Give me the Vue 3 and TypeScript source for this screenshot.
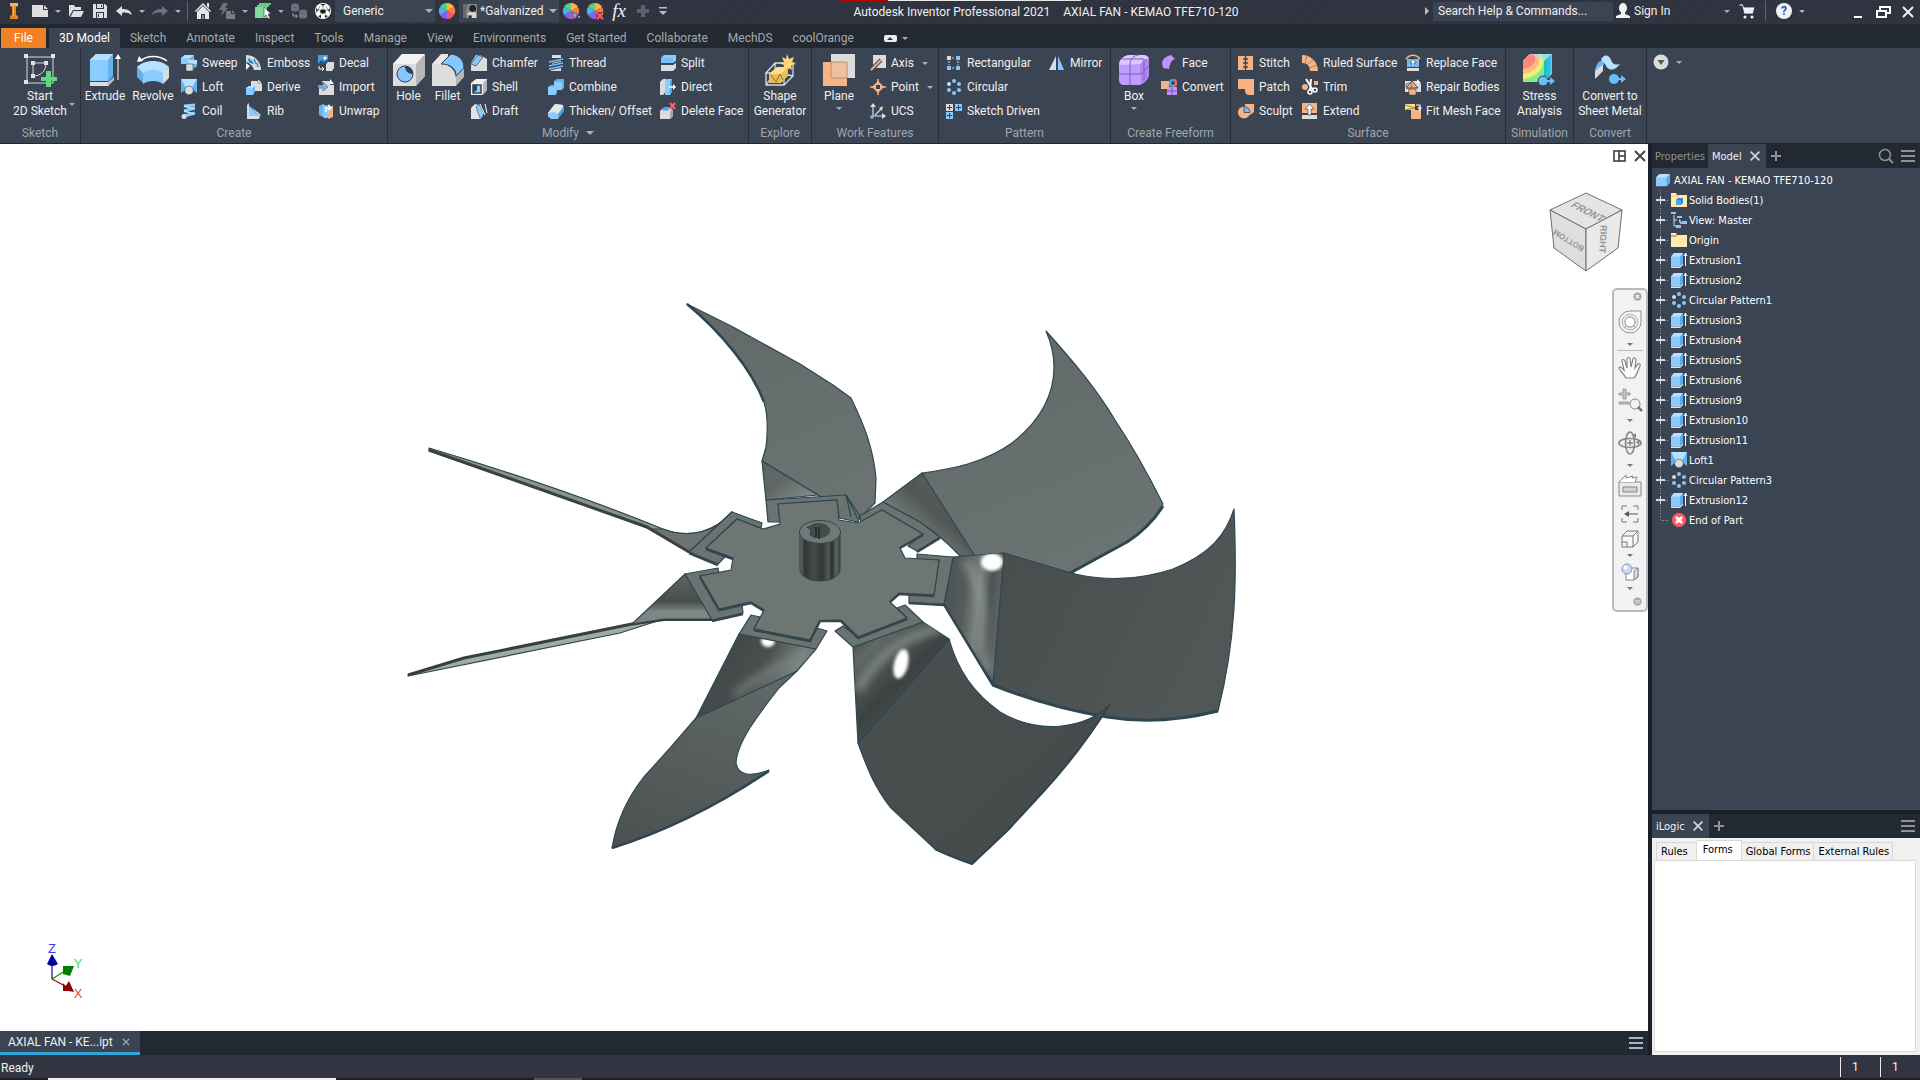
<script setup lang="ts">
import { ref } from 'vue'

interface Tool { icon: string; label: string; menu?: boolean }
interface BigTool { icon: string; lines: string[]; menu?: 'menu-side' | 'menu-below' }
interface Group { id: string; title: string; more?: boolean; big: BigTool[]; small: Tool[] }
interface QuickItem { kind: 'button' | 'menu' | 'sep'; icon?: string; label: string }
interface TreeNode { icon: string; label: string; leaf?: boolean }

const extrudeArt = '<path d="M0 4.500 3 1h9v10l-3 3.500H0z" fill="#8accff"/><path d="M0 4.500 3 1h9L9 4.500z" fill="#b8e0ff"/><path d="M9 4.500 12 1v10l-3 3z" fill="#58aeea"/><path d="M0 14.500h9l3-3.200V13l-3 3H0z" fill="#dcdcdc"/><path d="M14.500 14V2M13 4l1.500-3L16 4" stroke="#fff" fill="none"/>'
const loftArt = '<path d="M0 0h16v14l-4-3H4l-4 3z" fill="#62b4ee"/><path d="M0 0h16l-5 9H5z" fill="#b8e0ff"/><circle cx="8" cy="11.500" r="4.300" fill="#dcdcdc" stroke="#3b4453" stroke-width=".6"/>'
const circularArt = '<g fill="#84c8ff"><circle cx="8" cy="2" r="2"/><circle cx="13" cy="5" r="2"/><circle cx="13" cy="11" r="2"/><circle cx="8" cy="14" r="2"/><circle cx="3" cy="11" r="2"/></g><circle cx="3" cy="5" r="2" fill="#dcdcdc"/>'
const wheelArt = '<path d="M8 8V0a8 8 0 0 1 7 4z" fill="#ffb347"/><path d="M8 8l7-4a8 8 0 0 1 0 8z" fill="#ff7a45"/><path d="M8 8l7 4a8 8 0 0 1-7 4z" fill="#f0566e"/><path d="M8 8v8a8 8 0 0 1-7-4z" fill="#8a5cf0"/><path d="M8 8l-7 4a8 8 0 0 1 0-8z" fill="#49b6f2"/><path d="M8 8 1 4a8 8 0 0 1 7-4z" fill="#5ccf7a"/>'

const icons: Record<string, string> = {
  logo: '<path d="M4 0h8v3l-2 1v8l2 1v3H4v-3l2-1V4L4 3z" fill="#e0862c"/><path d="M4 0h8v3H4zM7 3h1v10H7z" fill="#f6b35c"/>',
  newDoc: '<path d="M0 2h11v5h5v7H0z" fill="#e0e0e0"/><path d="M12 2l4 4h-4z" fill="#e0e0e0"/>',
  open: '<path d="M1 14V2h5l1 2h6v3H5z" fill="#e0e0e0"/><path d="M5.500 8H16l-3 6H2.500z" fill="#e0e0e0"/>',
  save: '<path d="M1 1h12l2 2v12H1z" fill="#e0e0e0"/><path d="M4 1h8v5H4zM4 9h8v6H4z" fill="#303541"/><path d="M5 1h6v4H5zM5 10h6v5H5z" fill="#e0e0e0"/><path d="M9 2h1v2H9zM6 11h1v3H6z" fill="#303541"/>',
  undo: '<path d="M0 8l6-5v3c6 0 9 2 10 6-3-2-6-3-10-2v3z" fill="#e0e0e0"/>',
  redo: '<path d="M16 8l-6-5v3C4 6 1 8 0 12c3-2 6-3 10-2v3z" fill="#6b717d"/>',
  home: '<path d="M0 8 8 0l8 8-1 1-7-7-7 7z" fill="#e8e8e8"/><path d="M12 0h2v5l-2-2zM2 9l6-6 6 6v7h-4v-5H6v5H2z" fill="#e8e8e8"/><path d="M7 12h2v4H7z" fill="#8a8f99"/>',
  flash: '<path d="M4 0h5L6 5h3l-7 8 2-6H0z" fill="#6f747e"/><path d="M7 8h5v3h4v5H7zM13 7l3 3h-3z" fill="#777c85"/>',
  select: '<path d="M4 0h12v2H4zM2 2h12v2H2z" fill="#65c985"/><path d="M0 4h12v11H0z" fill="#80dc9c"/><path d="M9 4v10l2-2 2 4 2-1-2-4h3z" fill="#fff" stroke="#303541" stroke-width=".6"/>',
  database: '<g fill="#6b717d"><ellipse cx="4" cy="2.500" rx="4" ry="2"/><path d="M0 3c2 2 6 2 8 0v4c-2 2-6 2-8 0z"/><ellipse cx="12" cy="8.500" rx="4" ry="2"/><path d="M8 9c2 2 6 2 8 0v5c-2 2-6 2-8 0z"/></g><path d="M2 10v3h4M4.500 11.500 6.500 13l-2 2" stroke="#a0a4ab" fill="none"/>',
  ball: '<circle cx="8" cy="8" r="8" fill="#fff"/><path d="M6 6.500h4L11 9l-3 2-3-2z" fill="#15181d"/><path d="M5.500 1h5L8 3zM1 5l2 2-1.500 3zM15 5l-2 2 1.500 3zM3 13l3-1v3zM13 13l-3-1v3z" fill="#15181d"/><path d="M8 3v3M3 7l3 0M13 7h-3M6 12l0-3M10 12V9M3 7l2-4M13 7l-2-4" stroke="#555" stroke-width=".6"/>',
  wheel: wheelArt,
  material: '<path d="M0 0h16v16H0z" fill="#8a8a8a"/><path d="M0 0h6l-3 9 3 7H0z" fill="#6a6a6a"/><path d="M5 11l6-5 4 5v5H5z" fill="#d6d6d6"/><circle cx="11" cy="5" r="4" fill="#242424"/><path d="M6 16v-3h4v3z" fill="#333"/>',
  wheelAdjust: wheelArt + '<path d="M9 10h5v3l-2 3-2-3z" fill="#55b3f5" stroke="#303541" stroke-width=".5"/><path d="M15 14h2" stroke="#fff"/>',
  wheelClear: wheelArt + '<path d="M10 10l6 6M16 10l-6 6" stroke="#303541" stroke-width="4"/><path d="M10 10l6 6M16 10l-6 6" stroke="#ff5d67" stroke-width="2.200"/>',
  plus: '<path d="M6 2h4v4h4v4h-4v4H6v-4H2V6h4z" fill="#5c626e"/>',
  customize: '<path d="M4 4h8v1.500H4zM4 8h8l-4 4z" fill="#b8bdc6"/>',
  user: '<ellipse cx="8" cy="5" rx="4" ry="5" fill="#f2f2f2"/><path d="M6 9h4v2l5 2v2H1v-2l5-2z" fill="#f2f2f2"/>',
  cart: '<path d="M0 1h4l1 3h11l-2 7H5L3 3H0z" fill="#f2f2f2" stroke="#182c66" stroke-width=".8"/><circle cx="6" cy="14" r="1.500" fill="#f2f2f2"/><circle cx="13" cy="14" r="1.500" fill="#f2f2f2"/>',
  play: '<path d="M6 4v8l4-4z" fill="#b8bdc6"/>',
  minimize: '<path d="M4 12h8v2H4z" fill="#fff"/>',
  restore: '<path d="M5 6V3h10v6h-3M2 7h9v6H2z" stroke="#fff" stroke-width="2" fill="none"/>',
  close: '<path d="M3 3l10 10M13 3 3 13" stroke="currentColor" stroke-width="2" fill="none"/>',
  add: '<path d="M8 3v10M3 8h10" stroke="currentColor" stroke-width="2"/>',
  lines: '<path d="M1 3h14M1 8h14M1 13h14" stroke="currentColor" stroke-width="2"/>',
  search: '<circle cx="7" cy="7" r="5.500" stroke="currentColor" stroke-width="1.500" fill="none"/><path d="M11 11l4 4" stroke="currentColor" stroke-width="2"/>',
  split2: '<path d="M2 3h11v10H2zM7 3v10M7 8h6" stroke="#333" stroke-width="1.500" fill="none"/>',

  sketch: '<path d="M3 3h26v26H3z" stroke="#d8d8d8" fill="none"/><g fill="#e4e4e4"><path d="M0 0h4v4H0zM27 0h4v4h-4zM0 26h4v4H0zM7 7h4v4H7zM20 7h4v4h-4zM7 20h4v4H7z"/></g><path d="M9 9h13c0 8-5 13-13 13z" stroke="#d8d8d8" fill="none"/><path d="M22 17h5v6h6v4h-6v6h-5v-6h-5v-4h5z" fill="#62d784"/>',
  extrude: '<path d="M1 6 7 0h17v22l-5 5H1z" fill="#8accff"/><path d="M1 6 7 0h17l-5 6z" fill="#b8e0ff"/><path d="M19 6 24 0v22l-5 5z" fill="#62b4ee"/><path d="M1 28h18l6-5v3l-6 6H1z" fill="#dcdcdc"/><path d="M19 28l6-5v3l-6 6z" fill="#b4b4b4"/><path d="M29 26V4" stroke="#fff"/><path d="M26 5l3-5 3 5z" fill="#fff"/>',
  revolve: '<path d="M0 13C8 5 24 5 32 13l-6 7c-5-4-15-4-20 0z" fill="#b8e0ff"/><path d="M0 13l6 6v10l-6-6z" fill="#5fb0ec"/><path d="M6 19c5-4 15-4 20 0v11c-5-4-15-4-20 0z" fill="#8accff"/><path d="M26 19l6-6v11l-6 6z" fill="#dcdcdc"/><path d="M3 7C10 1 22 1 30 7" stroke="#fff" stroke-width="1.500" fill="none"/><path d="M0 8l2-6 4 5z" fill="#fff"/>',
  hole: '<path d="M0 10 9 0h23v22l-9 10H0z" fill="#dcdcdc"/><path d="M0 10 9 0h23l-9 10z" fill="#f3f3f3"/><path d="M23 10 32 0v22l-9 10z" fill="#b6b6b6"/><circle cx="12" cy="20" r="8" fill="#84c8ff" stroke="#334155"/><path d="M12 12a8 8 0 0 1 8 8c-4 0-8-2-8-8z" fill="#334155"/>',
  fillet: '<path d="M0 10 9 0h7v32H0z" fill="#e8e8e8"/><path d="M0 10h10c9 1 14 7 14 15v7H0z" fill="#dcdcdc"/><path d="M24 22l8-8v9l-8 9z" fill="#b6b6b6"/><path d="M9 10 19 0c8 1 13 6 13 14l-8 8C24 14 18 10 9 10z" fill="#84c8ff" stroke="#334155"/>',
  shape: '<path d="M2 19 11 9h18l-9 10zM2 19v12h18V19M20 31l9-9V9M20 19v12M11 9v9L2 31M11 18l18 4" stroke="#dcdcdc" stroke-width="1.300" fill="none"/><path d="M5 20l8-7h11v9l-7 7H5z" fill="#e8bf58"/><path d="M5 20h12l7-7H13z" fill="#ffe08a"/><path d="M7 21l5 7 4-8 3 6" stroke="#8a7038" fill="none"/><path d="M23 0l2 5 5-2-2 5 4 2-5 1 1 5-5-3-4 3 1-5-5-2 5-1-2-5 4 2z" fill="#ffd477"/>',
  plane: '<path d="M8 0h24v24H8z" fill="#dcdcdc"/><path d="M0 8h24v24H0z" fill="#f7b383"/><path d="M8 8h16v16H8z" fill="#efc0a0" stroke="#b98e70"/>',
  freeBox: '<path d="M1 11C1 5 7 1 12 1h13c4 0 6 2 6 6v13c0 4-5 11-11 11H6c-3 0-5-2-5-5z" fill="#bf9cff"/><path d="M1 11C1 5 7 1 12 1h13c3 0 5 1 6 4-4-1-6 5-8 5z" fill="#dcc8ff"/><path d="M22 11c2-4 5-7 9-6v15c0 4-4 9-8 10z" fill="#ae87ee"/><path d="M12 10v21M1 20h22l8-8M4 5h22v21M12 10c0-5 4-9 9-9" stroke="#7e60b4" fill="none"/>',
  stress: '<defs><linearGradient id="stressSide" x2="1"><stop stop-color="#12c4ad"/><stop offset="1" stop-color="#48b8f8"/></linearGradient></defs><path d="M0 7 7 0h22v20l-8 8H0z" fill="#5ed6c4"/><path d="M0 7 7 0h20l-6 7v21H0z" fill="#86ec8b"/><path d="M0 7 7 0h12c5 10-3 24-19 25z" fill="#f0ed78"/><path d="M0 7 7 0h8c4 9-2 19-15 20z" fill="#ffbd78"/><path d="M0 7 7 0h4c4 7-2 14-11 15z" fill="#ff8580"/><path d="M21 7l7-7v20l-7 7z" fill="url(#stressSide)"/><path d="M7 0h22l-7 7z" fill="#9ce2ff" opacity=".6"/><circle cx="20" cy="27" r="5" fill="#68bdfa" stroke="#334155"/><path d="M20 26h7v-3l5 4-5 4v-3h-7z" fill="#68bdfa"/>',
  sheet: '<path d="M1 15l8-5v7l-8 8z" fill="#dcdcdc"/><path d="M1 17C2 9 6 6 10 7v4c-3 0-6 3-9 7z" fill="#67b7ef"/><path d="M7 6c2-6 8-6 10 0 2 5 4 5 9 4-4 6-10 8-14 2-1-3-3-4-5-6z" fill="#b8e0ff"/><circle cx="20" cy="25" r="5" fill="#68bdfa"/><path d="M21 24h6v-3l5 4-5 4v-3h-6z" fill="#68bdfa"/>',

  sweep: '<path d="M0 3 4 0h9v4l3 2v5l-4 3-3-5H0z" fill="#67b7ef"/><path d="M0 3h9l4-3H4z" fill="#b8e0ff"/><path d="M0 3h8v6H0z" fill="#8accff"/><path d="M7 5h9v4H7z" fill="#b8e0ff"/><path d="M5 9h7v7H5z" fill="#dcdcdc" stroke="#3b4453" stroke-width=".6"/>',
  loft: loftArt,
  coil: '<path d="M3 3l11-1M3 8l11-3M3 13l11-3" stroke="#8accff" stroke-width="3"/><path d="M3 3l10 3M3 8l10 3" stroke="#b8e0ff" stroke-width="1.500"/><circle cx="3" cy="13.500" r="2.500" fill="#dcdcdc"/>',
  emboss: '<path d="M0 0c8 0 15 6 15 15H8C7 11 4 8 0 7z" fill="#dcdcdc"/><path d="M3 3l1 5M5 5l2 4M8 4l2 5M11 8l1 4M2 5l4 3" stroke="#228bd0" stroke-width="1.500"/><path d="M0 8l4 3-4 4z" fill="#f5f5f5"/>',
  derive: '<path d="M5 2h8l3 3v7H5z" fill="#dcdcdc"/><path d="M12 0l4 4h-4z" fill="#fff" stroke="#3b4453" stroke-width=".5"/><path d="M0 9l3-2h6v6l-2 3H0z" fill="#5fb0ec"/><path d="M0 9h7v7H0z" fill="#8accff"/><path d="M0 9l3-2h6L7 9z" fill="#b8e0ff"/>',
  rib: '<path d="M1 2l2-2v11l11 2-1 3H1z" fill="#dcdcdc"/><path d="M3 3l10 10H3z" fill="#8accff"/><path d="M4 3l11 9-2 1z" fill="#b8e0ff"/>',
  decal: '<path d="M0 0h10v9H0z" fill="#4a9ede"/><path d="M0 9l3-4 3 2 4-3v5z" fill="#24587e"/><circle cx="7" cy="3" r="1.500" fill="#fff"/><path d="M8 9l2-2h6v6l-2 3H8z" fill="#dcdcdc"/><path d="M1 11v3h4M4 12l2 2-2 2" stroke="#fff" fill="none"/>',
  import: '<path d="M4 2h8v4h4v10H1V9h5z" fill="#dcdcdc"/><path d="M12 0l4 5h-4z" fill="#fff"/><path d="M0 6h5V3l5 5-5 4V9H0z" fill="#70bdf6" stroke="#3b4453" stroke-width=".5"/>',
  unwrap: '<path d="M1 3l4-2v13l-4-2z" fill="#67b7ef"/><path d="M5 1c3 2 5 2 7 0v11c-2 4-5 4-7 2z" fill="#8accff"/><path d="M11 5l4-3v12l-5 2z" fill="#f7b383"/><path d="M8 9V5h4M10 2l3 3-3 2" stroke="#fff" stroke-width="1.500" fill="none"/>',
  chamfer: '<path d="M5 0h4l7 4v12H0V8z" fill="#dcdcdc"/><path d="M0 9 7 0l5 2-7 9z" fill="#84c8ff" stroke="#334155" stroke-width=".7"/>',
  shell: '<path d="M0 4 5 0h11v11l-5 5H0z" fill="#f0f0f0"/><path d="M12 4l4-4v11l-4 5z" fill="#b6b6b6"/><path d="M2 6h8v8H2z" fill="#8accff" stroke="#334155" stroke-width="1.500"/><path d="M2 6h4v5l-4 3z" fill="#334155"/>',
  draft: '<path d="M0 5l4-4 4 1 2 14H0z" fill="#e4e4e4"/><path d="M5 4l3-3 5 9-2 5H9z" fill="#8accff" stroke="#334155" stroke-width=".6"/><path d="M9 1l5 11M14 1l2 9" stroke="#fff"/>',
  thread: '<path d="M4 0h9v3H4zM3 13h10v3H3zM4 5h9v8H4z" fill="#dcdcdc"/><path d="M1 7l14-3M1 11l14-3M1 14l14-3" stroke="#334155" stroke-width="3"/><path d="M1 7l14-3M1 11l14-3M1 14l14-3" stroke="#76c0fa" stroke-width="1.600"/>',
  combine: '<path d="M6 2l3-2h7v9l-3 2H9v3l-3 2H0V8l3-2h3z" fill="#62b4ee"/><path d="M6 3h8v8H8v5H0V8h6z" fill="#8accff"/>',
  thicken: '<path d="M0 10 7 1l8 1v3l-6 9H0z" fill="#dcdcdc"/><path d="M0 10 6 9l4 2v5H3l-3-3z" fill="#8accff"/><path d="M10 11l6-8v5l-6 8z" fill="#4fa5e3"/><path d="M0 10 7 1l8 1-5 8-4-2z" fill="#e8e8e8"/>',
  splitBody: '<path d="M1 3l3-3h12v6l-3 2H1z" fill="#8accff"/><path d="M1 3h12v5H1z" fill="#76c0fa"/><path d="M1 10h12l3-2v5l-3 3H1z" fill="#dcdcdc"/><path d="M0 9h13l3-3" stroke="#3b4453" fill="none"/>',
  direct: '<path d="M0 3l3-3h3v12l-3 4H0z" fill="#dcdcdc"/><path d="M5 2l2-2h5v13l-2 3H5z" fill="#8accff"/><path d="M10 2l2-2v13l-2 3z" fill="#4fa5e3"/><path d="M9 8h5" stroke="#fff" stroke-width="1.500"/><path d="M13 5l3 3-3 3z" fill="#fff"/>',
  deleteFace: '<path d="M0 8l3-3h6l4 2v6l-3 3H0z" fill="#dcdcdc"/><path d="M1 7l3-3h5l-1 4z" fill="#4fa5e3"/><path d="M10 8l3-1v6l-3 3z" fill="#aaa"/><path d="M10 0l5 6M15 0l-5 6" stroke="#ff5d67" stroke-width="2"/>',
  axis: '<path d="M3 0h13v13H3z" fill="#dcdcdc"/><path d="M1 15 11 5" stroke="#3b4453" stroke-width="4"/><path d="M1 15 11 5" stroke="#f7b383" stroke-width="2"/>',
  point: '<path d="M8 0v16M0 8h16" stroke="#f7b383" stroke-width="1.500"/><path d="M8 2l6 6-6 6-6-6z" fill="#f7b383"/><path d="M6 6h4v4H6z" fill="#3b4453"/>',
  ucs: '<path d="M3 2v11h12M5 12l6-6" stroke="#dcdcdc" stroke-width="1.200" fill="none"/><path d="M3 0l3 4H0zM16 13l-4-3v6zM9 5l4-2-1 5z" fill="#dcdcdc"/><circle cx="2" cy="14" r="1.800" fill="#70bdf6"/>',
  rectangular: '<path d="M1 1h4v4H1z" fill="#dcdcdc"/><path d="M10 1h4v4h-4zM1 11h4v4H1zM10 11h4v4h-4z" fill="#84c8ff"/><path d="M6 3h3M3 6v4M12 6v4M6 13h3" stroke="#dcdcdc" stroke-dasharray="2 1"/>',
  circular: circularArt,
  driven: '<path d="M0 1h7v7H0z" fill="#dcdcdc"/><path d="M9 1h7v7H9zM0 9h7v7H0z" fill="#84c8ff"/><path d="M3.500 2v5M1 4.500h5M12.500 2v5M10 4.500h5M3.500 10v5M1 12.500h5" stroke="#334155"/>',
  mirror: '<path d="M0 15 7 1v14z" fill="#dcdcdc"/><path d="M15 15 9 1v14z" fill="#84c8ff"/>',
  face: '<path d="M1 8C2 3 6 1 10 0l4 4c-5 2-5 6-6 10L2 13z" fill="#bf94ff"/>',
  convert: '<path d="M0 2h8v8H0z" fill="#f7b383"/><path d="M6 8h10v8H6z" fill="#bf94ff"/><path d="M11 8v8M6 12h10" stroke="#6f50aa" stroke-width=".8"/><circle cx="12" cy="4" r="3" fill="none" stroke="#49aef0" stroke-width="2"/><path d="M12 1a3 3 0 0 1 0 6" fill="none" stroke="#ff5d67" stroke-width="2"/>',
  stitch: '<path d="M0 1h15v14H0z" fill="#f7b383"/><path d="M7.500 1v14" stroke="#3b4453" stroke-width="1.400"/><path d="M5 4h5M5 8h5M5 12h5" stroke="#3b4453" stroke-width="1.300"/>',
  patch: '<path d="M0 0h16v16h-4c-4 0-5-2-5-6H0z" fill="#f7b383"/>',
  sculpt: '<path d="M7 1h9v8l-4 3-5-5z" fill="#f7b383"/><circle cx="6" cy="9.500" r="6" fill="#f7b383"/><path d="M6 3.500a6 6 0 0 1 6 6H6z" fill="#70bdf6" stroke="#334155" stroke-width=".8"/>',
  ruled: '<path d="M0 0c9 0 16 7 16 16H8C8 11 5 8 0 8z" fill="#f7b383"/><path d="M5 0 3 9M11 5l-6 5M15 10l-8 3" stroke="#9b765c" stroke-width=".8"/>',
  trim: '<circle cx="3" cy="8" r="3" fill="#f7b383"/><path d="M12 2h4v4h-4z" fill="#f7b383"/><path d="M4 0l7 11M9 0 8 11" stroke="#fff" stroke-width="2"/><circle cx="8" cy="13" r="2" fill="none" stroke="#fff" stroke-width="1.500"/><circle cx="13" cy="11" r="2" fill="none" stroke="#fff" stroke-width="1.500"/>',
  extend: '<path d="M0 0h15v10H0z" fill="#f7b383"/><path d="M0 12h15v4H0z" fill="#dcdcdc"/><path d="M6 12V6H3l4.500-5L12 6H9v6z" fill="#fff" stroke="#3b4453" stroke-width=".7"/>',
  replaceFace: '<path d="M1 4c4-5 10-5 14 0" stroke="#f7b383" stroke-width="1.700" fill="none"/><path d="M2 4h12v8H2z" fill="#70bdf6"/><path d="M2 13h12v3H2z" fill="#dcdcdc"/><path d="M7 12V8H5l3-4 3 4H9v4z" fill="#fff" stroke="#3b4453" stroke-width=".6"/>',
  repair: '<path d="M0 2h12l4 3v8H0z" fill="#dcdcdc"/><path d="M12 0l4 4h-4z" fill="#fff"/><path d="M7 2l6 7H1z" fill="#f7b383" stroke="#3b4453"/><path d="M4 10h7v6H4z" fill="#f7b383" stroke="#3b4453" stroke-width=".6"/><circle cx="4" cy="7" r="3" fill="none" stroke="#8b654d"/>',
  fitMesh: '<path d="M0 1h10v6H0z" fill="#ffe08a"/><path d="M0 2l10 3-10 2" stroke="#9a8750" fill="none"/><path d="M6 7h10v9H6z" fill="#f7b383"/><path d="M11 2h4v4M13 4l2 3 1-3" stroke="#fff" stroke-width="1.200" fill="none"/>',
  appsCircle: '<circle cx="8" cy="8" r="7.500" fill="#dcdcdc"/><path d="M4.500 6h7L8 11z" fill="#555"/>',

  part: '<path d="M0 5 4 1h12v10l-4 4H0z" fill="#8accff"/><path d="M0 5 4 1h12l-4 4z" fill="#b8e0ff"/><path d="M12 5l4-4v10l-4 4z" fill="#58aeea"/>',
  bodies: '<path d="M0 1h5l1 2h10v12H0z" fill="#ffe9ac"/><path d="M0 4h8" stroke="#d5bd7c" stroke-width=".7"/><path d="M5 8l2-2h5v5l-2 2H5z" fill="#2d87cc"/><path d="M5 8h5v5H5z" fill="#4fa5e3"/>',
  view: '<path d="M3 3v11h3M3 8h3" stroke="#dcdcdc" fill="none"/><path d="M0 0h5v2H0zM6 4h5v2H6zM11 9h5v3h-5zM5 13h5v3H5z" fill="#84c8ff"/><path d="M8 8h1v3h2" stroke="#fff" fill="none"/>',
  folder: '<path d="M0 1h5l1 2h10v12H0z" fill="#ffe9ac"/><path d="M0 4h5l2-2" stroke="#3b4453" stroke-width=".7" fill="none"/>',
  extrusion: extrudeArt,
  end: '<circle cx="8" cy="8" r="7" fill="#ff5b60"/><path d="M5 5l6 6M11 5l-6 6" stroke="#fff" stroke-width="2.500"/>',

  navWheel: '<path d="M12 1h11v11a11 11 0 1 1-11-11z" fill="#f7f7f8" stroke="#8f9196"/><circle cx="12" cy="12" r="8" fill="#e5e6e9" stroke="#b4b6ba"/><circle cx="12" cy="12" r="5" fill="#fff" stroke="#8f9196"/><path d="M6 18l3-3M18 18l-3-3" stroke="#8f9196"/>',
  navHand: '<path d="M8 22C6 18 1 14 1 12c1-2 3 0 5 2L4 5c0-2 2-2 3 0l2 7V3c0-2 3-2 3 0l1 8 2-8c1-2 3-1 3 1l-1 8 3-4c1-1 3 0 2 2l-3 7c-1 3-2 4-3 5z" fill="#fafafa" stroke="#85878b" stroke-width="1.200"/>',
  navZoom: '<path d="M5 1h3v4h4v2H8v4H5V7H1V5h4zM1 14h10v2H1z" fill="#c3c5c9" stroke="#85878b" stroke-width=".7"/><circle cx="17" cy="16" r="5" fill="#eef3f2" stroke="#85878b"/><path d="M20 19l4 4" stroke="#777" stroke-width="2.500"/>',
  navOrbit: '<ellipse cx="12" cy="12" rx="11" ry="4.500" fill="none" stroke="#85878b" stroke-width="1.600"/><ellipse cx="12" cy="12" rx="4.500" ry="11" fill="none" stroke="#85878b" stroke-width="1.600"/><path d="M12 9v6M9 12h6" stroke="#85878b" stroke-width="1.500"/><path d="M14 5l4-3v5zM18 11l4-2-1 5z" fill="#85878b"/>',
  navLook: '<path d="M1 9h22v14H1z" fill="#e9eaec" stroke="#85878b"/><path d="M1 9 8 2v3l7-2-1 2 5-1-2 5" fill="#fff" stroke="#85878b"/><path d="M5 14h14v5H5z" fill="#cfd1d6" stroke="#85878b"/>',
  navFit: '<path d="M4 8V4h5M15 4h5v4M20 16v4h-5M9 20H4v-4" stroke="#777" fill="none"/><path d="M8 12h12" stroke="#555"/><path d="M6 12l5-3v6z" fill="#555"/>',
  navCube: '<path d="M4 9l5-5h11v11l-5 5H4zM4 9h11v11M15 9l5-5M4 15h5v5" fill="#f7f7f8" stroke="#777"/>',
  navGhost: '<path d="M8 11l4-3h8v9l-4 3H8z" fill="#fff" stroke="#7d8799"/><path d="M16 11v9l4-4V8z" fill="#dcdfe4" stroke="#7d8799"/><circle cx="9" cy="9" r="5" fill="#c9d8ee" stroke="#8698b8"/><circle cx="7.500" cy="7.500" r="2" fill="#fff"/>',
  navClose: '<circle cx="8" cy="8" r="6" fill="#a8a8a8"/><path d="M5.500 5.500l5 5M10.500 5.500l-5 5" stroke="#fff" stroke-width="1.600"/>',
  navMore: '<circle cx="8" cy="8" r="6" fill="#a8a8a8"/><path d="M4 7h8M5 10h6" stroke="#fff"/>',
}

const quick: QuickItem[] = [
  { kind: 'button', icon: 'newDoc', label: 'New' },
  { kind: 'menu', label: 'New options' },
  { kind: 'button', icon: 'open', label: 'Open' },
  { kind: 'button', icon: 'save', label: 'Save' },
  { kind: 'button', icon: 'undo', label: 'Undo' },
  { kind: 'menu', label: 'Undo history' },
  { kind: 'button', icon: 'redo', label: 'Redo' },
  { kind: 'menu', label: 'Redo history' },
  { kind: 'sep', label: '' },
  { kind: 'button', icon: 'home', label: 'Home' },
  { kind: 'button', icon: 'flash', label: 'Update' },
  { kind: 'menu', label: 'Update options' },
  { kind: 'button', icon: 'select', label: 'Select' },
  { kind: 'menu', label: 'Select options' },
  { kind: 'button', icon: 'database', label: 'Component' },
  { kind: 'button', icon: 'ball', label: 'Material browser' },
]

const tabs = ['3D Model', 'Sketch', 'Annotate', 'Inspect', 'Tools', 'Manage', 'View', 'Environments', 'Get Started', 'Collaborate', 'MechDS', 'coolOrange']
const activeTab = ref('3D Model')

const groups: Group[] = [
  { id: 'sketch', title: 'Sketch', big: [{ icon: 'sketch', lines: ['Start', '2D Sketch'], menu: 'menu-side' }], small: [] },
  {
    id: 'create', title: 'Create',
    big: [{ icon: 'extrude', lines: ['Extrude'] }, { icon: 'revolve', lines: ['Revolve'] }],
    small: [
      { icon: 'sweep', label: 'Sweep' }, { icon: 'loft', label: 'Loft' }, { icon: 'coil', label: 'Coil' },
      { icon: 'emboss', label: 'Emboss' }, { icon: 'derive', label: 'Derive' }, { icon: 'rib', label: 'Rib' },
      { icon: 'decal', label: 'Decal' }, { icon: 'import', label: 'Import' }, { icon: 'unwrap', label: 'Unwrap' },
    ],
  },
  {
    id: 'modify', title: 'Modify', more: true,
    big: [{ icon: 'hole', lines: ['Hole'] }, { icon: 'fillet', lines: ['Fillet'] }],
    small: [
      { icon: 'chamfer', label: 'Chamfer' }, { icon: 'shell', label: 'Shell' }, { icon: 'draft', label: 'Draft' },
      { icon: 'thread', label: 'Thread' }, { icon: 'combine', label: 'Combine' }, { icon: 'thicken', label: 'Thicken/ Offset' },
      { icon: 'splitBody', label: 'Split' }, { icon: 'direct', label: 'Direct' }, { icon: 'deleteFace', label: 'Delete Face' },
    ],
  },
  { id: 'explore', title: 'Explore', big: [{ icon: 'shape', lines: ['Shape', 'Generator'] }], small: [] },
  {
    id: 'work', title: 'Work Features',
    big: [{ icon: 'plane', lines: ['Plane'], menu: 'menu-below' }],
    small: [{ icon: 'axis', label: 'Axis', menu: true }, { icon: 'point', label: 'Point', menu: true }, { icon: 'ucs', label: 'UCS' }],
  },
  {
    id: 'pattern', title: 'Pattern', big: [],
    small: [
      { icon: 'rectangular', label: 'Rectangular' }, { icon: 'circular', label: 'Circular' }, { icon: 'driven', label: 'Sketch Driven' },
      { icon: 'mirror', label: 'Mirror' },
    ],
  },
  {
    id: 'freeform', title: 'Create Freeform',
    big: [{ icon: 'freeBox', lines: ['Box'], menu: 'menu-below' }],
    small: [{ icon: 'face', label: 'Face' }, { icon: 'convert', label: 'Convert' }],
  },
  {
    id: 'surface', title: 'Surface', big: [],
    small: [
      { icon: 'stitch', label: 'Stitch' }, { icon: 'patch', label: 'Patch' }, { icon: 'sculpt', label: 'Sculpt' },
      { icon: 'ruled', label: 'Ruled Surface' }, { icon: 'trim', label: 'Trim' }, { icon: 'extend', label: 'Extend' },
      { icon: 'replaceFace', label: 'Replace Face' }, { icon: 'repair', label: 'Repair Bodies' }, { icon: 'fitMesh', label: 'Fit Mesh Face' },
    ],
  },
  { id: 'simulation', title: 'Simulation', big: [{ icon: 'stress', lines: ['Stress', 'Analysis'] }], small: [] },
  { id: 'metal', title: 'Convert', big: [{ icon: 'sheet', lines: ['Convert to', 'Sheet Metal'] }], small: [] },
]

const extrusion = (n: number): TreeNode => ({ icon: 'extrusion', label: `Extrusion${n}` })
const tree: TreeNode[] = [
  { icon: 'bodies', label: 'Solid Bodies(1)' },
  { icon: 'view', label: 'View: Master' },
  { icon: 'folder', label: 'Origin' },
  extrusion(1), extrusion(2),
  { icon: 'circular', label: 'Circular Pattern1' },
  ...[3, 4, 5, 6, 9, 10, 11].map(extrusion),
  { icon: 'loft', label: 'Loft1' },
  { icon: 'circular', label: 'Circular Pattern3' },
  extrusion(12),
  { icon: 'end', label: 'End of Part', leaf: true },
]

const logicTabs = ['Rules', 'Forms', 'Global Forms', 'External Rules']
const activeLogic = ref('Forms')
</script>

<template>
  <div class="app">
    <header class="titlebar">
      <div class="quick">
        <button class="logo" aria-label="Application menu"><svg class="ic" viewBox="0 0 16 16" v-html="icons.logo"></svg></button>
        <template v-for="(q, i) in quick" :key="i">
          <span v-if="q.kind === 'sep'" class="bar-sep"></span>
          <button v-else-if="q.kind === 'menu'" class="menu" :aria-label="q.label"><i class="caret"></i></button>
          <button v-else class="tool" :aria-label="q.label"><svg class="ic" viewBox="0 0 16 16" v-html="icons[q.icon!]"></svg></button>
        </template>
        <div class="combo">
          <select aria-label="Material"><option>Generic</option></select>
          <i class="caret big"></i>
        </div>
        <button class="tool" aria-label="Appearance"><svg class="ic" viewBox="0 0 16 16" v-html="icons.wheel"></svg></button>
        <div class="combo swatch">
          <svg class="chip" viewBox="0 0 16 16" v-html="icons.material"></svg>
          <select aria-label="Appearance override"><option>*Galvanized</option></select>
          <i class="caret big"></i>
        </div>
        <button class="tool" aria-label="Adjust appearance"><svg class="ic" viewBox="0 0 16 16" v-html="icons.wheelAdjust"></svg></button>
        <button class="tool" aria-label="Clear appearance"><svg class="ic" viewBox="0 0 16 16" v-html="icons.wheelClear"></svg></button>
        <button class="tool fx">fx</button>
        <button class="tool" aria-label="Add"><svg class="ic" viewBox="0 0 16 16" v-html="icons.plus"></svg></button>
        <button class="customize" aria-label="Customize toolbar"><svg class="ic" viewBox="0 0 16 16" v-html="icons.customize"></svg></button>
      </div>
      <div class="title"><span>Autodesk Inventor Professional 2021</span><span>AXIAL FAN - KEMAO TFE710-120</span></div>
      <div class="account">
        <button class="menu" aria-label="Collapse search"><svg class="ic" viewBox="0 0 16 16" v-html="icons.play"></svg></button>
        <input class="search" type="text" placeholder="Search Help &amp; Commands..." aria-label="Search help and commands">
        <button class="signin"><svg class="ic" viewBox="0 0 16 16" v-html="icons.user"></svg><span>Sign In</span><i class="caret"></i></button>
        <button class="tool" aria-label="App store"><svg class="ic" viewBox="0 0 16 16" v-html="icons.cart"></svg></button>
        <span class="bar-sep"></span>
        <button class="tool" aria-label="Help"><span class="help">?</span></button>
        <button class="menu" aria-label="Help options"><i class="caret"></i></button>
      </div>
      <div class="window">
        <button class="tool" aria-label="Minimize"><svg class="ic" viewBox="0 0 16 16" v-html="icons.minimize"></svg></button>
        <button class="tool" aria-label="Restore"><svg class="ic" viewBox="0 0 16 16" v-html="icons.restore"></svg></button>
        <button class="tool" aria-label="Close"><svg class="ic" viewBox="0 0 16 16" v-html="icons.close"></svg></button>
      </div>
      <div class="peek"></div>
    </header>

    <nav class="tabs">
      <button class="file">File</button>
      <button v-for="t in tabs" :key="t" class="tab" :class="{ on: t === activeTab }" @click="activeTab = t">{{ t }}</button>
      <button class="minimise" aria-label="Minimize ribbon"><span class="pill"></span><i class="caret"></i></button>
    </nav>

    <section class="ribbon">
      <div v-for="g in groups" :key="g.id" class="group" :class="g.id">
        <div class="body">
          <button v-for="b in g.big" :key="b.icon" class="large" :class="b.menu">
            <svg class="ic32" viewBox="0 0 32 32" v-html="icons[b.icon]"></svg>
            <span v-for="l in b.lines" :key="l">{{ l }}</span>
            <i v-if="b.menu" class="caret"></i>
          </button>
          <div v-if="g.small.length" class="cols">
            <button v-for="s in g.small" :key="s.icon" class="small">
              <svg class="ic" viewBox="0 0 16 16" v-html="icons[s.icon]"></svg><span>{{ s.label }}</span><i v-if="s.menu" class="caret"></i>
            </button>
          </div>
        </div>
        <div class="caption">{{ g.title }}<i v-if="g.more" class="caret big"></i></div>
      </div>
      <button class="extra" aria-label="Ribbon options"><svg class="ic" viewBox="0 0 16 16" v-html="icons.appsCircle"></svg><i class="caret"></i></button>
    </section>

    <div class="work-area">
      <main class="document">
        <div class="viewport">
          <svg class="scene" viewBox="0 144 1648 887" preserveAspectRatio="xMidYMid meet">
            <defs>
              <linearGradient id="lit" x1="0" y1="0" x2=".4" y2="1"><stop stop-color="#606967" /><stop offset="1" stop-color="#6a7371" /></linearGradient>
              <linearGradient id="dark" x1="0" y1="0" x2="1" y2=".4"><stop stop-color="#474d4c" /><stop offset="1" stop-color="#505756" /></linearGradient>
              <linearGradient id="deep" x1="0" y1="0" x2="1" y2="1"><stop stop-color="#4a504f" /><stop offset="1" stop-color="#444a49" /></linearGradient>
              <linearGradient id="mid" x1=".6" y1="0" x2=".2" y2="1"><stop stop-color="#5f6866" /><stop offset="1" stop-color="#4c5251" /></linearGradient>
              <linearGradient id="foldA" x1="0" y1="0" x2="1" y2="1"><stop stop-color="#5d6463" /><stop offset=".45" stop-color="#606766" /><stop offset="1" stop-color="#8b9491" /></linearGradient>
              <linearGradient id="foldB" x1="0" y1="1" x2="1" y2="0"><stop stop-color="#8b9592" /><stop offset=".35" stop-color="#6f7876" /><stop offset=".55" stop-color="#4f5654" /><stop offset="1" stop-color="#626a68" /></linearGradient>
              <linearGradient id="foldC" x1="0" y1="0" x2="1" y2=".25"><stop stop-color="#4b5150" /><stop offset=".4" stop-color="#555c5b" /><stop offset=".62" stop-color="#79827f" /><stop offset=".8" stop-color="#4c5251" /><stop offset="1" stop-color="#606866" /></linearGradient>
              <linearGradient id="foldD" x1="0" y1="0" x2=".7" y2=".9"><stop stop-color="#343939" /><stop offset=".25" stop-color="#616967" /><stop offset=".42" stop-color="#4b5150" /><stop offset=".6" stop-color="#3c4141" /><stop offset="1" stop-color="#5a6160" /></linearGradient>
              <linearGradient id="foldE" x1="0" y1=".3" x2="1" y2=".7"><stop stop-color="#3d4242" /><stop offset=".5" stop-color="#4a504f" /><stop offset=".75" stop-color="#79827f" /><stop offset="1" stop-color="#4b5150" /></linearGradient>
              <linearGradient id="foldF" x1="0" y1="0" x2="0" y2="1"><stop stop-color="#5e6664" /><stop offset=".55" stop-color="#474d4c" /><stop offset=".75" stop-color="#7d8784" /><stop offset="1" stop-color="#7c8583" /></linearGradient>
              <linearGradient id="tube"><stop stop-color="#667270" /><stop offset=".12" stop-color="#2f3534" /><stop offset=".35" stop-color="#464d4b" /><stop offset=".55" stop-color="#303635" /><stop offset=".72" stop-color="#535b59" /><stop offset=".8" stop-color="#282d2c" /><stop offset=".9" stop-color="#5c6462" /><stop offset="1" stop-color="#394140" /></linearGradient>
              <filter id="soft" x="-50%" y="-50%" width="200%" height="200%"><feGaussianBlur stdDeviation="1.6" /></filter>
              <filter id="softer" x="-50%" y="-50%" width="200%" height="200%"><feGaussianBlur stdDeviation="4" /></filter>
              <clipPath id="clipC"><path d="M953 557 1004 553 993 683 944 604z" /></clipPath>
              <clipPath id="clipD"><path d="M853 647 923 622 949 639 858 743z" /></clipPath>
              <clipPath id="clipE"><path d="M739 634 816 649 797 671 696 718z" /></clipPath>
            </defs>

            <g stroke="#2e4652" stroke-width="1.200" stroke-linejoin="round">
              <!-- top blade -->
              <path d="M687 304 733 327 800 364 833 385 851 398C864 425 873 447 876 478L875 503 858 520 818 495 762 461 766 447C768 430 768 415 764 402 752 370 722 333 687 304z" fill="url(#lit)" />
              <path d="M687 304C722 333 752 370 764 402" stroke-width="2.500" fill="none" />
              <path d="M762 461 818 495 766 500z" fill="url(#foldA)" />
              <!-- thin left blades -->
              <path d="M429 448Q560 487 663 529C690 539 715 532 732 512L689 552 647 528 567 498 429 451z" fill="#879390" />
              <path d="M663 529C690 539 715 532 732 512L689 552 650 529z" fill="#6b7472" />
              <path d="M429 450 647 527 689 552" stroke="#39423f" stroke-width="3" fill="none" />
              <path d="M408 675 464 658 632 624 664 619 648 624 620 633 408 676z" fill="#a0aaa6" />
              <path d="M408 675 464 658 632 624 664 619.500 713 619.500" stroke="#33403f" stroke-width="3" fill="none" />
              <path d="M685 574 632 624 664 619 713 619z" fill="url(#foldF)" />
              <!-- upper right blade -->
              <path d="M922 473C952 469 984 463 1012 443 1040 421 1054 395 1054 367 1054 352 1050 340 1046 331 1072 360 1096 388 1115 420 1135 450 1150 478 1163 504 1153 522 1141 533 1127 542L1070 574 975 562z" fill="url(#lit)" />
              <path d="M1163 506C1153 522 1141 533 1127 542L1070 573" stroke-width="3" fill="none" />
              <path d="M883 502 922 473 975 556 960 556Q940 535 920 522z" fill="url(#foldB)" />
              <!-- right blade -->
              <path d="M1004 553 1068 572C1100 582 1140 580 1173 569 1210 554 1226 535 1234 509 1237 580 1236 640 1218 711 1190 718 1150 724 1107 717 1065 710 1030 700 993 685z" fill="url(#dark)" />
              <path d="M944 604 993 685C1030 700 1065 710 1107 717 1150 724 1190 718 1218 711" stroke-width="3" fill="none" />
              <path d="M953 557 1004 553 993 683 944 604z" fill="url(#foldC)" />
              <!-- lower right blade -->
              <path d="M949 639C958 672 975 694 1000 712 1040 736 1088 728 1110 704Q1080 752 1043 792L1008 830 972 864C955 858 945 854 935 849L891 808C874 787 866 765 858 743z" fill="url(#deep)" />
              <path d="M1110 704Q1080 752 1043 792L1008 830 972 864C955 858 945 854 935 849" stroke-width="2" fill="none" />
              <path d="M853 647 923 622 949 639 858 743z" fill="url(#foldD)" />
              <!-- bottom blade -->
              <path d="M797 671 779 688C758 715 737 742 736 763 738 776 752 777 769 770 720 804 670 830 612 848 615 830 622 805 643 778L671 747 696 718z" fill="url(#mid)" />
              <path d="M769 771C720 804 670 830 612 848" stroke-width="2.500" fill="none" />
              <path d="M739 634 816 649 797 671 696 718z" fill="url(#foldE)" />
            </g>

            <g clip-path="url(#clipC)">
              <path d="M965 560Q985 590 982 625T990 670" stroke="#8a9491" stroke-width="7" fill="none" filter="url(#softer)" />
              <ellipse cx="992" cy="562" rx="11" ry="9" fill="#fff" filter="url(#soft)" />
            </g>
            <g clip-path="url(#clipD)">
              <path d="M858 690Q885 640 940 628" stroke="#808a87" stroke-width="8" fill="none" filter="url(#softer)" />
              <ellipse cx="901" cy="664" rx="7" ry="15" transform="rotate(14 901 664)" fill="#fff" filter="url(#soft)" />
            </g>
            <g clip-path="url(#clipE)">
              <path d="M735 695Q770 665 812 655" stroke="#7f8986" stroke-width="5" fill="none" filter="url(#softer)" />
              <ellipse cx="768" cy="641" rx="7" ry="6" fill="#fff" filter="url(#soft)" />
            </g>

            <!-- root flaps around the hub -->
            <g fill="#69736f" stroke="#2e4652" stroke-width="1.200" stroke-linejoin="round">
              <path d="M766 500 846 495 860 516 858 522 839 518 837 500 778 504 780 522 768 522z" />
              <path d="M846 495 851 517M846 495l12 24" fill="none" />
              <path d="M860 516 883 502 920 522 940 537 917 551 908 546 923 534 882 510 861 522z" />
              <path d="M917 554 953 557 944 604 909 603V595h25L939 560 917 559z" />
              <path d="M905 605 923 622 853 647 835 631 843 626 858 637 907 618 897 608z" />
              <path d="M751 615 739 634 816 649 827 631 817 628 810 640 754 629 760 617z" />
              <path d="M685 574 718 568 719 573 700 576 719 609 742 605 743 613 712 620z" />
              <path d="M732 512 762 523 761 528 737 519 706 548 725 557 718 564 689 552z" />
            </g>
            <path d="M780 524 778 504 837 500 839 520 858 523 882 510 923 534 900 548 905 558 939 560 934 595 899 593 890 602 907 618 858 637 841 620 820 621 810 640 754 629 764 610 751 602 719 609 700 576 731 570 733 558 706 548 737 519 763 529z" fill="#6d7673" stroke="#2e4652" stroke-width="1.200" />
            <path d="M923 535 900 548M934 596 899 594 890 602M907 619 858 638 841 621H820L810 641 754 630M764 611 751 603 719 610 700 577M733 559 706 549M689 553 718 565M712 621 743 614M909 603 944 605M917 552 940 538" fill="none" stroke="#33454d" stroke-width="2.500" />

            <!-- shaft -->
            <path d="M800 532V570a20 11 0 0 0 40 0V532z" fill="url(#tube)" stroke="#2e4652" />
            <ellipse cx="820" cy="532" rx="20.500" ry="11.500" fill="#6f7976" stroke="#2e4652" />
            <path d="M807 527l5-1v-1a11 7 0 1 1-2 10l1-5z" fill="#454d4b" stroke="#2e4652" />
            <path d="M816 527v11M819 527v12" stroke="#2b3231" stroke-width="2" />

            <!-- axis triad -->
            <g stroke-width="1.200" fill="none"><path d="M52 979V962" stroke="#0000a8" /><path d="M52 979 65 971" stroke="#00a000" /><path d="M52 979 65 986" stroke="#a00000" /></g>
            <path d="M52 954 58 964Q52 968 47 964z" fill="#000098" />
            <path d="M74 966 70 976 63 966z M63 966v8l7 2z" fill="#007c00" />
            <path d="M74 992 69 981 63 990z M63 983v8l7 0z" fill="#8c0000" />
            <g class="axis-names"><text x="52" y="953" fill="#3b3bf0">Z</text><text x="78" y="968" fill="#3be63b">Y</text><text x="78" y="998" fill="#f24040">X</text></g>

            <!-- view cube -->
            <g stroke="#6f6f6f" stroke-width="1" stroke-linejoin="round">
              <path d="M1586 193 1622 210 1586 229 1550 210z" fill="#e4e4e4" />
              <path d="M1550 210 1586 229V271L1554 248z" fill="#dedede" />
              <path d="M1622 210 1586 229V271L1618 248z" fill="#e9e9e9" />
            </g>
            <g class="cube-names">
              <text class="front" transform="translate(1585 214) rotate(27) skewX(-25)">FRONT</text>
              <text class="bottom" transform="translate(1570 238) rotate(211)">BOTTOM</text>
              <text class="right" transform="translate(1600 239) rotate(93)">RIGHT</text>
            </g>
          </svg>

          <div class="view-buttons">
            <button aria-label="Tile views"><svg class="ic" viewBox="0 0 16 16" v-html="icons.split2"></svg></button>
            <button aria-label="Close view"><svg class="ic" viewBox="0 0 16 16" v-html="icons.close"></svg></button>
          </div>

          <div class="navbar">
            <button class="corner" aria-label="Close navigation bar"><svg viewBox="0 0 16 16" v-html="icons.navClose"></svg></button>
            <button class="nav tall" aria-label="Navigation wheel"><svg viewBox="0 0 24 24" v-html="icons.navWheel"></svg></button>
            <button class="drop" aria-label="Wheel options"><i class="caret"></i></button>
            <hr>
            <button class="nav" aria-label="Pan"><svg viewBox="0 0 24 24" v-html="icons.navHand"></svg></button>
            <button class="nav" aria-label="Zoom"><svg viewBox="0 0 24 24" v-html="icons.navZoom"></svg></button>
            <button class="drop" aria-label="Zoom options"><i class="caret"></i></button>
            <button class="nav tall" aria-label="Orbit"><svg viewBox="0 0 24 24" v-html="icons.navOrbit"></svg></button>
            <button class="drop" aria-label="Orbit options"><i class="caret"></i></button>
            <button class="nav" aria-label="Look at"><svg viewBox="0 0 24 24" v-html="icons.navLook"></svg></button>
            <button class="nav low" aria-label="Previous view"><svg viewBox="0 0 24 24" v-html="icons.navFit"></svg></button>
            <button class="nav low" aria-label="View face"><svg viewBox="0 0 24 24" v-html="icons.navCube"></svg></button>
            <button class="drop" aria-label="View options"><i class="caret"></i></button>
            <button class="nav low" aria-label="Visual style"><svg viewBox="0 0 24 24" v-html="icons.navGhost"></svg></button>
            <button class="drop" aria-label="Style options"><i class="caret"></i></button>
            <button class="corner last" aria-label="Navigation bar options"><svg viewBox="0 0 16 16" v-html="icons.navMore"></svg></button>
          </div>
        </div>

        <div class="doc-tabs">
          <div class="doc-tab"><button class="doc-name">AXIAL FAN - KE...ipt</button><button class="doc-close" aria-label="Close document"><svg viewBox="0 0 16 16" v-html="icons.close"></svg></button></div>
          <button class="doc-list" aria-label="Document list"><svg class="ic" viewBox="0 0 16 16" v-html="icons.lines"></svg></button>
        </div>
      </main>

      <aside class="side">
        <section class="browser">
          <div class="panel-tabs">
            <button class="ptab">Properties</button>
            <button class="ptab on">Model</button>
            <button class="pclose" aria-label="Close Model"><svg class="ic" viewBox="0 0 16 16" v-html="icons.close"></svg></button>
            <button class="padd" aria-label="Add panel"><svg class="ic" viewBox="0 0 16 16" v-html="icons.add"></svg></button>
            <span class="grow"></span>
            <button class="picon" aria-label="Search"><svg class="ic" viewBox="0 0 16 16" v-html="icons.search"></svg></button>
            <button class="picon" aria-label="Panel menu"><svg class="ic" viewBox="0 0 16 16" v-html="icons.lines"></svg></button>
          </div>
          <div class="tree">
            <div class="root"><svg viewBox="0 0 16 16" v-html="icons.part"></svg><span>AXIAL FAN - KEMAO TFE710-120</span></div>
            <ul>
              <li v-for="n in tree" :key="n.label" :class="{ leaf: n.leaf }">
                <span class="twig"></span>
                <svg class="ic" viewBox="0 0 16 16" v-html="icons[n.icon]"></svg>
                <span>{{ n.label }}</span>
              </li>
            </ul>
          </div>
        </section>

        <section class="ilogic">
          <div class="panel-tabs">
            <button class="ptab on">iLogic</button>
            <button class="pclose" aria-label="Close iLogic"><svg class="ic" viewBox="0 0 16 16" v-html="icons.close"></svg></button>
            <button class="padd" aria-label="Add panel"><svg class="ic" viewBox="0 0 16 16" v-html="icons.add"></svg></button>
            <span class="grow"></span>
            <button class="picon" aria-label="Panel menu"><svg class="ic" viewBox="0 0 16 16" v-html="icons.lines"></svg></button>
          </div>
          <div class="logic-body">
            <div class="logic-tabs">
              <button v-for="t in logicTabs" :key="t" :class="{ on: t === activeLogic }" @click="activeLogic = t">{{ t }}</button>
            </div>
            <div class="logic-page"></div>
          </div>
        </section>
      </aside>
    </div>

    <footer class="status"><span class="ready">Ready</span><span class="cell">1</span><span class="cell">1</span></footer>
    <div class="taskbar"><span class="task"></span><span class="task dim"></span></div>
  </div>
</template>

<style>
html, body, #app { height: 100%; }
body { margin: 0; overflow: hidden; }
</style>

<style scoped>
.app {
  --ui: Roboto, 'Open Sans', sans-serif;
  --tree: 'DejaVu Sans Condensed', 'DejaVu Sans', sans-serif;
  display: flex;
  flex-direction: column;
  height: 100vh;
  background: #3b4453;
  color: #f0f0f0;
  font: 12px/16px var(--ui);
}
button, input, select { font: inherit; color: inherit; background: none; border: 0; padding: 0; margin: 0; border-radius: 0; }
button { display: flex; align-items: center; justify-content: center; white-space: nowrap; }
svg { display: block; flex: none; overflow: visible; }
.ic { width: 16px; height: 16px; }
.caret { display: block; flex: none; width: 0; height: 0; border: solid transparent; border-width: 3px 3px 0; border-top-color: #a9b0bb; }
.caret.big { border-width: 4px 4px 0; }

/* title bar */
.titlebar { position: relative; display: flex; height: 24px; background: repeating-linear-gradient(135deg, #303541 0 3px, #2c313c 3px 4px); }
.quick, .account, .window { display: flex; align-items: center; height: 22px; }
.logo { width: 28px; }
.tool { width: 24px; height: 22px; }
.menu { width: 12px; height: 22px; }
.bar-sep { flex: none; width: 1px; height: 20px; margin: 0 3px; background: #5d636e; }
.account .bar-sep { margin: 0 6px; }
.combo { display: flex; align-items: center; gap: 3px; box-sizing: border-box; width: 100px; height: 22px; padding: 0 2px 0 8px; background: #3b4453; }
.combo.swatch { padding-left: 4px; }
.combo select { flex: 1; min-width: 0; appearance: none; overflow: hidden; }
.combo option { color: #222; }
.chip { width: 14px; height: 14px; }
.fx { font: italic 19px/20px 'Liberation Serif', serif; }
.customize { width: 16px; height: 22px; }
.title { flex: 1; display: flex; justify-content: center; gap: 13px; line-height: 24px; white-space: nowrap; }
.search { box-sizing: border-box; width: 180px; height: 19px; padding: 0 5px; background: #3b4453; }
.search::placeholder { color: #f0f0f0; opacity: 1; }
.signin { width: 122px; height: 22px; gap: 3px; justify-content: flex-start; padding-left: 2px; }
.signin .caret { margin-left: auto; margin-right: 5px; }
.help { width: 16px; height: 16px; border-radius: 50%; background: #f2f2f2; color: #2457c4; font-weight: 700; line-height: 16px; text-align: center; }
.window { margin-left: 37px; height: 24px; }
.window .tool { width: 25px; }
.peek { position: absolute; top: 0; left: 840px; width: 241px; height: 1px; background: linear-gradient(90deg, #c00000 48px, #e8e8e8 48px); }

/* ribbon tabs */
.tabs { display: flex; align-items: flex-end; height: 24px; padding-left: 1px; background: #232932; color: #a3a9a8; }
.file { width: 45px; height: 20px; margin-right: 3px; background: #f08124; color: #fff; }
.tab { height: 20px; padding: 0 10px; }
.tab.on { background: #3b4453; color: #fff; }
.minimise { gap: 5px; height: 20px; margin-left: 20px; }
.pill { width: 13px; height: 7px; border-radius: 2px; background: #eee; }
.pill::after { content: ''; display: block; width: 0; margin: 2px auto; border: solid transparent; border-width: 0 3px 3px; border-bottom-color: #333; }

/* ribbon */
.ribbon { display: flex; height: 95px; border-bottom: 1px solid #232932; background: #3b4453; }
.group { display: flex; flex-direction: column; flex: none; box-sizing: border-box; border-right: 1px solid #262d38; }
.sketch { width: 81px; }
.create { width: 307px; }
.modify { width: 361px; }
.explore { width: 63px; }
.work { width: 127px; }
.pattern { width: 172px; }
.freeform { width: 120px; }
.surface { width: 275px; }
.simulation { width: 68px; }
.metal { width: 73px; }
.body { display: flex; height: 72px; padding: 3px 0 0 2px; gap: 4px; }
.pattern .body, .surface .body { padding-left: 5px; }
.sketch .body, .explore .body, .simulation .body, .metal .body { padding-left: 0; justify-content: center; }
.large { position: relative; flex-direction: column; justify-content: flex-start; padding-top: 3px; line-height: 15px; }
.ic32 { width: 32px; height: 32px; margin-bottom: 3px; }
.menu-side .caret { position: absolute; right: -8px; top: 52px; }
.menu-below .caret { margin-top: 3px; }
.create .large { width: 44px; }
.modify .large { width: 36px; }
.modify .body { padding-left: 3px; }
.work .large { width: 50px; }
.freeform .large { width: 42px; }
.cols { display: grid; grid-auto-flow: column; grid-template-rows: repeat(3, 24px); align-content: start; }
.create .cols { grid-template-columns: 65px 72px 64px; }
.modify .cols { grid-template-columns: 77px 112px 90px; }
.pattern .cols { grid-template-columns: 103px 60px; }
.surface .cols { grid-template-columns: 64px 103px 100px; }
.small { justify-content: flex-start; gap: 5px; padding: 0 2px; }
.small .caret { margin-left: 3px; }
.caption { display: flex; align-items: center; justify-content: center; gap: 7px; height: 20px; color: #a0a6ac; }
.extra { gap: 7px; height: 28px; padding-left: 6px; }

/* document */
.work-area { flex: 1; display: flex; min-height: 0; }
.document { flex: 1; display: flex; flex-direction: column; min-width: 0; }
.viewport { position: relative; flex: 1; min-height: 0; background: #fff; overflow: hidden; }
.scene { width: 100%; height: 100%; }
.axis-names { font: 13px 'Liberation Sans', sans-serif; text-anchor: middle; }
.cube-names { font: bold 9px 'Liberation Sans', sans-serif; text-anchor: middle; fill: #979797; }
.cube-names .front { font-size: 10px; }
.cube-names .bottom { font-size: 8px; }
.view-buttons { position: absolute; top: 4px; right: 0; display: flex; gap: 4px; color: #444; }
.navbar { position: absolute; top: 144px; right: 0; width: 32px; border: 2px solid #bababa; border-radius: 5px; background: #f2f2f2; }
.navbar button { width: 100%; }
.navbar .nav { height: 32px; }
.navbar .nav.tall { height: 37px; }
.navbar .nav.low { height: 25px; }
.nav svg { width: 24px; height: 24px; }
.navbar .drop { height: 8px; }
.drop .caret { border-top-color: #777; }
.navbar .corner { height: 13px; justify-content: flex-end; padding-right: 3px; }
.navbar .corner.last { height: 18px; }
.corner svg { width: 11px; height: 11px; }
.navbar hr { margin: 2px 3px 1px; border: 0; height: 1px; background: #bababa; }
.doc-tabs { display: flex; justify-content: space-between; height: 24px; background: #232932; }
.doc-tab { display: flex; align-items: center; box-sizing: border-box; width: 140px; padding: 0 8px; gap: 8px; background: #3b4453; border-bottom: 3px solid #2fa5dd; }
.doc-close { color: #9fb0c4; }
.doc-close svg { width: 10px; height: 10px; }
.doc-list { width: 24px; color: #a6b4c6; }

/* side panels */
.side { display: flex; flex-direction: column; gap: 4px; width: 268px; border-left: 4px solid #1b2028; background: #1b2028; font: 11px/20px var(--tree); }
.browser { flex: 1; display: flex; flex-direction: column; min-height: 0; background: #3b4453; }
.panel-tabs { display: flex; height: 24px; background: #232932; color: #8d9396; }
.ptab { padding: 1px 3px 0; }
.ptab.on { padding: 1px 2px 0 4px; background: #3b4453; color: #f0f0f0; }
.pclose { width: 22px; background: #3b4453; color: #d0d5dc; }
.pclose svg { width: 14px; height: 14px; }
.padd { width: 20px; }
.padd svg { width: 16px; height: 16px; }
.picon { width: 22px; }
.panel-tabs .picon:last-child { margin-right: 1px; }
.grow { flex: 1; }
.tree { padding: 2px 4px; color: #fff; white-space: nowrap; line-height: 18px; }
.root span, .tree svg + span { padding-top: 2px; }
.root { display: flex; align-items: center; gap: 4px; height: 20px; }
.root svg { width: 14px; height: 14px; }
.tree ul { margin: 0; padding: 0; list-style: none; }
.tree li { display: flex; align-items: center; gap: 2px; height: 20px; }
.twig { position: relative; width: 13px; height: 20px; background: linear-gradient(#d4dbe4, #d4dbe4) 0 9px / 9px 2px no-repeat; }
.twig::before { content: ''; position: absolute; left: 4px; top: 0; bottom: 0; width: 1px; background: repeating-linear-gradient(#8c95a3 0 1px, transparent 1px 3px); }
.twig::after { content: ''; position: absolute; left: 4px; top: 6px; width: 8px; height: 8px; background: linear-gradient(#d4dbe4, #d4dbe4) 0 0 / 1px 8px no-repeat, repeating-linear-gradient(90deg, #8c95a3 0 1px, transparent 1px 2px) 5px 4px / 3px 1px no-repeat; }
.leaf .twig { background: repeating-linear-gradient(90deg, #8c95a3 0 1px, transparent 1px 2px) 5px 10px / 7px 1px no-repeat; }
.leaf .twig::before { bottom: 9px; }
.leaf .twig::after { content: none; }

.ilogic { display: flex; flex-direction: column; height: 241px; }
.logic-body { flex: 1; display: flex; flex-direction: column; padding: 2px 4px 3px 2px; background: #f0f0f0; color: #000; }
.logic-tabs { display: flex; align-items: flex-end; height: 20px; padding-left: 2px; }
.logic-tabs button { height: 18px; padding: 1px 3px 0 4px; border: 1px solid #d9d9d9; border-width: 1px 1px 0 0; background: #f0f0f0; }
.logic-tabs button:first-child { border-left-width: 1px; padding-right: 8px; }
.logic-tabs button.on { height: 20px; padding: 0 8px 2px 6px; background: #fff; }
.logic-page { flex: 1; border: 1px solid #d9d9d9; background: #fff; }

/* status bar */
.status { display: flex; align-items: center; height: 23px; background: #303541; }
.ready { flex: 1; padding: 2px 0 0 1px; }
.cell { box-sizing: border-box; width: 40px; height: 20px; padding-left: 11px; border-left: 1px solid #e8e8e8; line-height: 20px; }
.taskbar { display: flex; gap: 198px; height: 2px; padding-left: 48px; background: #1e1d22; }
.task { width: 288px; background: #f2f2f2; }
.task.dim { width: 48px; background: #555; }
</style>
